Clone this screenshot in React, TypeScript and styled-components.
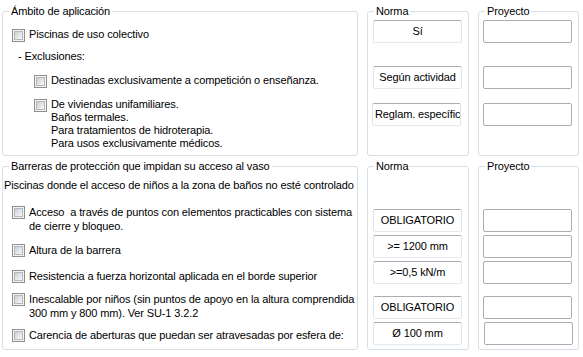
import React from "react";
import styled, { createGlobalStyle } from "styled-components";

const GlobalStyle = createGlobalStyle`
  html, body {
    margin: 0;
    padding: 0;
    background: #ffffff;
  }
  body {
    font-family: "Liberation Sans", Arial, sans-serif;
    font-size: 11px;
    letter-spacing: -0.12px;
    color: #000000;
  }
`;

const Page = styled.div`
  width: 583px;
  height: 357px;
  box-sizing: border-box;
  padding: 5px 0 0 2px;
  display: flex;
  flex-direction: column;
  gap: 4px;
`;

const Section = styled.div<{ $height: number }>`
  display: flex;
  gap: 9px;
  height: ${({ $height }) => $height}px;
`;

const Group = styled.fieldset<{ $width: number }>`
  box-sizing: border-box;
  width: ${({ $width }) => $width}px;
  height: 100%;
  margin: 0;
  padding: 0;
  min-width: 0;
  border: 1px solid #d5dfe5;
  border-radius: 3px;
`;

const Legend = styled.legend`
  margin-left: 6px;
  padding: 0 2px;
  font-size: 11px;
  line-height: 13px;
`;

const Body = styled.div<{ $pad: number }>`
  display: flex;
  flex-direction: column;
  align-items: flex-start;
  padding-left: ${({ $pad }) => $pad}px;
`;

const Note = styled.div<{ $top: number; $indent: number }>`
  margin: ${({ $top }) => $top}px 0 0 ${({ $indent }) => $indent}px;
  line-height: 13px;
  white-space: nowrap;
`;

const CheckRow = styled.div<{ $top: number; $indent: number; $lh?: number }>`
  display: flex;
  align-items: flex-start;
  gap: 4px;
  margin: ${({ $top }) => $top}px 0 0 ${({ $indent }) => $indent}px;
  line-height: ${({ $lh }) => $lh ?? 13}px;
  white-space: nowrap;
`;

const Check = styled.span`
  flex: none;
  box-sizing: border-box;
  width: 13px;
  height: 13px;
  margin-top: 1px;
  border: 1px solid #8e8f8f;
  background: #f4f4f4;
  padding: 1px;

  &::after {
    content: "";
    display: block;
    box-sizing: border-box;
    width: 9px;
    height: 9px;
    border: 1px solid #b4b8bd;
    background: linear-gradient(135deg, #cbcfd5 0%, #e4e6e9 55%, #f7f7f7 100%);
  }
`;

const Field = styled.div<{ $top: number; $left: number; $ro?: boolean }>`
  box-sizing: border-box;
  width: 89px;
  height: 23px;
  margin: ${({ $top }) => $top}px 0 0 ${({ $left }) => $left}px;
  padding: 0 2px;
  border: 1px solid ${({ $ro }) => ($ro ? "#e2e3ea" : "#abadb3")};
  border-top-color: #abadb3;
  border-bottom-color: ${({ $ro }) => ($ro ? "#e3e9ef" : "#abadb3")};
  border-radius: 2px;
  background: #ffffff;
  line-height: 20px;
  text-align: center;
  white-space: nowrap;
  overflow: hidden;
`;

type Spot = { top: number; left: number; text?: string };

const FieldColumn: React.FC<{ spots: Spot[]; readOnly?: boolean }> = ({
  spots,
  readOnly,
}) => (
  <Body $pad={0}>
    {spots.map((s, i) => (
      <Field key={i} $top={s.top} $left={s.left} $ro={readOnly}>
        {s.text}
      </Field>
    ))}
  </Body>
);

const App: React.FC = () => {
  return (
    <>
      <GlobalStyle />
      <Page>
        <Section $height={151}>
          <Group $width={356}>
            <Legend>Ámbito de aplicación</Legend>
            <Body $pad={9}>
              <CheckRow $top={10} $indent={0}>
                <Check />
                <span>Piscinas de uso colectivo</span>
              </CheckRow>
              <Note $top={8} $indent={6}>
                - Exclusiones:
              </Note>
              <CheckRow $top={11} $indent={22}>
                <Check />
                <span>Destinadas exclusivamente a competición o enseñanza.</span>
              </CheckRow>
              <CheckRow $top={10} $indent={22}>
                <Check />
                <span>
                  De viviendas unifamiliares.
                  <br />
                  Baños termales.
                  <br />
                  Para tratamientos de hidroterapia.
                  <br />
                  Para usos exclusivamente médicos.
                </span>
              </CheckRow>
            </Body>
          </Group>
          <Group $width={102}>
            <Legend>Norma</Legend>
            <FieldColumn
              readOnly
              spots={[
                { top: 2, left: 5, text: "Sí" },
                { top: 23, left: 5, text: "Según actividad" },
                { top: 14, left: 4, text: "Reglam. específico" },
              ]}
            />
          </Group>
          <Group $width={101}>
            <Legend>Proyecto</Legend>
            <FieldColumn
              spots={[
                { top: 2, left: 4 },
                { top: 23, left: 4 },
                { top: 14, left: 4 },
              ]}
            />
          </Group>
        </Section>

        <Section $height={190}>
          <Group $width={356}>
            <Legend>Barreras de protección que impidan su acceso al vaso</Legend>
            <Body $pad={1}>
              <Note $top={6} $indent={0}>
                Piscinas donde el acceso de niños a la zona de baños no esté controlado
              </Note>
              <CheckRow $top={13} $indent={8} $lh={14}>
                <Check />
                <span>
                  {"Acceso\u00a0 a través de puntos con elementos practicables con sistema"}
                  <br />
                  de cierre y bloqueo.
                </span>
              </CheckRow>
              <CheckRow $top={10} $indent={8} $lh={14}>
                <Check />
                <span>Altura de la barrera</span>
              </CheckRow>
              <CheckRow $top={12} $indent={8} $lh={14}>
                <Check />
                <span>Resistencia a fuerza horizontal aplicada en el borde superior</span>
              </CheckRow>
              <CheckRow $top={9} $indent={8} $lh={14}>
                <Check />
                <span>
                  Inescalable por niños (sin puntos de apoyo en la altura comprendida
                  <br />
                  300 mm y 800 mm). Ver SU-1 3.2.2
                </span>
              </CheckRow>
              <CheckRow $top={8} $indent={8} $lh={14}>
                <Check />
                <span>Carencia de aberturas que puedan ser atravesadas por esfera de:</span>
              </CheckRow>
            </Body>
          </Group>
          <Group $width={102}>
            <Legend>Norma</Legend>
            <FieldColumn
              readOnly
              spots={[
                { top: 36, left: 5, text: "OBLIGATORIO" },
                { top: 3, left: 5, text: ">= 1200 mm" },
                { top: 3, left: 5, text: ">=0,5 kN/m" },
                { top: 12, left: 5, text: "OBLIGATORIO" },
                { top: 3, left: 5, text: "Ø 100 mm" },
              ]}
            />
          </Group>
          <Group $width={101}>
            <Legend>Proyecto</Legend>
            <FieldColumn
              spots={[
                { top: 36, left: 4 },
                { top: 3, left: 4 },
                { top: 3, left: 4 },
                { top: 12, left: 4 },
                { top: 3, left: 5 },
              ]}
            />
          </Group>
        </Section>
      </Page>
    </>
  );
};

export default App;
